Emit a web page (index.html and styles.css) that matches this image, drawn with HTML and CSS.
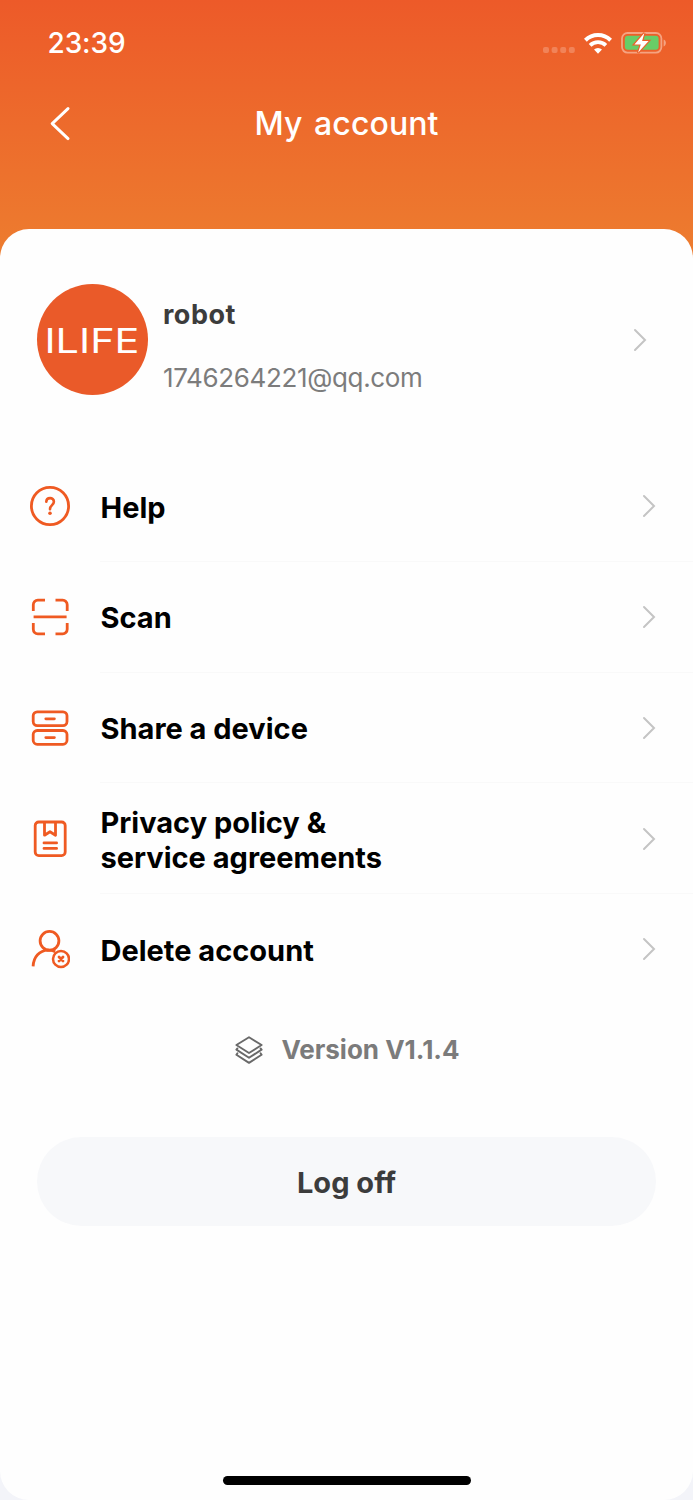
FILE: index.html
```html
<!DOCTYPE html>
<html lang="en">
<head>
    <meta charset="UTF-8">
    <meta name="viewport" content="width=device-width, initial-scale=1.0">
    <title>My account</title>
    <link rel="stylesheet" href="styles.css">
</head>
<body>
    <svg width="0" height="0" class="defs">
        <symbol id="chevron" viewBox="0 0 14 24">
            <path d="M2 2l10 10L2 22" fill="none" stroke="#c4c4c4" stroke-width="2" stroke-linecap="round"/>
        </symbol>
    </svg>

    <header class="header">
        <div class="status-bar">
            <span class="time">23:39</span>
            <div class="status-icons">
                <svg class="signal" width="32" height="6" viewBox="0 0 32 6" fill="#fff" fill-opacity=".22">
                    <rect x="0" y="0" width="6" height="6" rx="2"/>
                    <rect x="8.6" y="0" width="6" height="6" rx="2"/>
                    <rect x="17.2" y="0" width="6" height="6" rx="2"/>
                    <rect x="25.8" y="0" width="6" height="6" rx="2"/>
                </svg>
                <svg class="wifi" width="28" height="21" viewBox="0 0 28 21" fill="none" stroke="#fff">
                    <path d="M1.4 7.2a18 18 0 0 1 25.2 0" stroke-width="4"/>
                    <path d="M6.1 12.4a11.4 11.4 0 0 1 15.8 0" stroke-width="3.8"/>
                    <path d="M14 20.8l-4-4.2a5.7 5.7 0 0 1 8 0z" fill="#fff" stroke="none"/>
                </svg>
                <svg class="battery" width="46" height="22" viewBox="0 0 46 22">
                    <rect x="1" y="1" width="39.4" height="19.6" rx="5.5" fill="none" stroke="#f5a381" stroke-width="1.8"/>
                    <path d="M42.6 7.4c3 .9 3 6 0 7z" fill="#f5a381"/>
                    <rect x="3.8" y="3.8" width="33.8" height="14" rx="3" fill="#68cd67"/>
                    <path d="M23.4 1L13.4 12.4h6.4l-2.8 8.4L27.6 8.9h-6.5z" fill="#fff" stroke="#ec6129" stroke-width="2.4" paint-order="stroke"/>
                </svg>
            </div>
        </div>
        <div class="nav-bar">
            <svg class="back" width="20" height="34" viewBox="0 0 20 34">
                <path d="M18 1.6L2.2 16.6 18 31.6" fill="none" stroke="#fff" stroke-width="2.9" stroke-linecap="round" stroke-linejoin="round"/>
            </svg>
            <h1>My account</h1>
        </div>
    </header>

    <main class="card">
        <section class="profile">
            <div class="avatar">
                <svg width="111" height="111" viewBox="0 0 111 111">
                    <text class="logo" x="7.5" y="68.5" textLength="95" lengthAdjust="spacingAndGlyphs">ILIFE</text>
                </svg>
            </div>
            <div class="profile-info">
                <div class="name">robot</div>
                <div class="email">1746264221@qq.com</div>
            </div>
            <svg class="chevron" width="14" height="24"><use href="#chevron"/></svg>
        </section>

        <ul class="menu">
            <li>
                <svg class="icon" viewBox="0 0 40 40">
                    <circle cx="20" cy="20" r="18.6"/>
                    <path d="M16.3 15.8c.1-5 7.6-4.9 7.6-.1 0 3.2-3.9 3.6-3.9 7.2v.4" stroke-width="2.6"/>
                    <circle class="solid" cx="20" cy="27.3" r="1.8"/>
                </svg>
                <div class="row">
                    <span>Help</span>
                    <svg class="chevron" width="14" height="24"><use href="#chevron"/></svg>
                </div>
            </li>
            <li>
                <svg class="icon" viewBox="0 0 40 40">
                    <path d="M15 3.2H7.8a4.5 4.5 0 0 0-4.5 4.5V14M25.5 3.2h7.2a4.5 4.5 0 0 1 4.5 4.5V14M15 36.8H7.8a4.5 4.5 0 0 1-4.5-4.5V26M25.5 36.8h7.2a4.5 4.5 0 0 0 4.5-4.5V26M3.6 19.8h33" stroke-linecap="butt"/>
                </svg>
                <div class="row">
                    <span>Scan</span>
                    <svg class="chevron" width="14" height="24"><use href="#chevron"/></svg>
                </div>
            </li>
            <li>
                <svg class="icon" viewBox="0 0 40 40">
                    <rect x="3.2" y="3.8" width="33.8" height="13.8" rx="4"/>
                    <rect x="3.2" y="22.5" width="33.8" height="13.8" rx="4"/>
                    <path d="M15.8 10.8h8.6M15.8 29.6h8.6"/>
                </svg>
                <div class="row">
                    <span>Share a device</span>
                    <svg class="chevron" width="14" height="24"><use href="#chevron"/></svg>
                </div>
            </li>
            <li>
                <svg class="icon" viewBox="0 0 40 40">
                    <rect x="5.2" y="3" width="30" height="33.6" rx="3.6"/>
                    <path d="M14.5 3.5v12.7l5.5-3.5 5.5 3.5V3.5M14 23.9h12.6M14 29.4h12.6"/>
                </svg>
                <div class="row">
                    <span>Privacy policy &amp;<br>service agreements</span>
                    <svg class="chevron" width="14" height="24"><use href="#chevron"/></svg>
                </div>
            </li>
            <li>
                <svg class="icon" viewBox="0 0 40 40">
                    <circle cx="19.5" cy="10.8" r="9.4"/>
                    <path d="M3.1 36.4C3.5 26.7 9.5 20.5 18 20.2c2.8 0 5 .4 7.2 1.5" stroke-linecap="butt"/>
                    <circle cx="31" cy="29" r="8" stroke-width="2.5"/>
                    <path d="M29 27l4 4M33 27l-4 4" stroke-width="2.8"/>
                </svg>
                <div class="row">
                    <span>Delete account</span>
                    <svg class="chevron" width="14" height="24"><use href="#chevron"/></svg>
                </div>
            </li>
        </ul>

        <div class="version">
            <svg width="28" height="28" viewBox="0 0 28 28" fill="none" stroke="#696969" stroke-width="1.9" stroke-linejoin="round" stroke-linecap="round">
                <path d="M14 1.2L26.6 9 14 17 1.4 9z"/>
                <path d="M2.4 12.4L1.4 13.6 14 21.8l12.6-8.2-1-1.2M2.4 17.3l-1 1.4L14 26.9l12.6-8.2-1-1.4"/>
            </svg>
            <span>Version V1.1.4</span>
        </div>

        <button class="log-off">Log off</button>

        <div class="home-indicator"></div>
    </main>
</body>
</html>
```

FILE: styles.css
```css
* {
    box-sizing: border-box;
}

body {
    margin: 0;
    height: 1500px;
    display: flex;
    flex-direction: column;
    font-family: Inter, "Liberation Sans", sans-serif;
    background: linear-gradient(#ed5a29, #ed7d2f 260px, #f3f4f9 260px);
    overflow: hidden;
}

.defs {
    position: absolute;
}

.header {
    height: 229px;
    color: #fff;
}

.status-bar {
    height: 86px;
    padding: 0 26px 0 47.5px;
    display: flex;
    justify-content: space-between;
    align-items: center;
}

.time {
    font-size: 28px;
    font-weight: 500;
    letter-spacing: -0.1px;
}

.status-icons {
    display: flex;
    align-items: center;
}

.signal {
    margin: 14px 9px 0 0;
}

.wifi {
    margin-right: 9px;
}

.nav-bar {
    height: 75px;
    padding: 0 50px;
    display: grid;
    grid-template-columns: 20px 1fr 20px;
    align-items: center;
}

h1 {
    margin: 0;
    text-align: center;
    font-size: 32px;
    font-weight: 500;
    letter-spacing: 0.1px;
    word-spacing: 3px;
}

.card {
    flex: 1;
    display: flex;
    flex-direction: column;
    background: #fefefe;
    border-radius: 29px;
}

.profile {
    display: flex;
    align-items: center;
    padding: 55px 46px 0 37px;
}

.avatar {
    width: 111px;
    height: 111px;
    border-radius: 50%;
    background: #ea5a29;
}

.logo {
    font-size: 33.5px;
    font-weight: 400;
    fill: #fff;
}

.profile-info {
    flex: 1;
    margin-left: 15px;
    padding-top: 12px;
}

.name {
    font-size: 27px;
    font-weight: 700;
    line-height: 32px;
    letter-spacing: 0.5px;
    color: #3c3c3c;
    margin: 1px 0 31px;
}

.email {
    font-size: 26px;
    line-height: 32px;
    letter-spacing: -0.35px;
    color: #7c7c7c;
}

.menu {
    list-style: none;
    margin: 56px 0 0;
    padding: 0;
}

.menu li {
    height: 110.8px;
    display: flex;
    align-items: center;
    padding-left: 30px;
}

.icon {
    width: 40px;
    height: 40px;
    margin-right: 30px;
    fill: none;
    stroke: #ef5a22;
    stroke-width: 2.8;
    stroke-linecap: round;
    stroke-linejoin: round;
}

.icon .solid {
    fill: #ef5a22;
    stroke: none;
}

.row {
    flex: 1;
    height: 100%;
    display: flex;
    align-items: center;
    justify-content: space-between;
    padding: 2.6px 37px 0 0;
    border-bottom: 1px solid #f9f9f9;
    font-size: 29px;
    font-weight: 700;
    line-height: 35px;
    color: #000;
}

.row span {
    margin-left: 0.5px;
}

.row .chevron {
    margin-top: -2px;
}

.menu li:last-child .row {
    padding-top: 1px;
    border-bottom: none;
}

.version {
    display: flex;
    align-items: center;
    justify-content: center;
    gap: 18px;
    height: 32px;
    margin: 29px 0 0 2px;
    font-size: 26px;
    font-weight: 700;
    color: #7b7b7b;
}

.log-off {
    height: 89px;
    margin: 71.5px 37px 0;
    padding-top: 3px;
    border: none;
    border-radius: 45px;
    background: #f7f8fa;
    font-family: inherit;
    font-size: 29px;
    font-weight: 700;
    color: #3c3c3c;
}

.home-indicator {
    width: 248px;
    height: 9px;
    margin: auto auto 15px;
    border-radius: 5px;
    background: #000;
}
```
